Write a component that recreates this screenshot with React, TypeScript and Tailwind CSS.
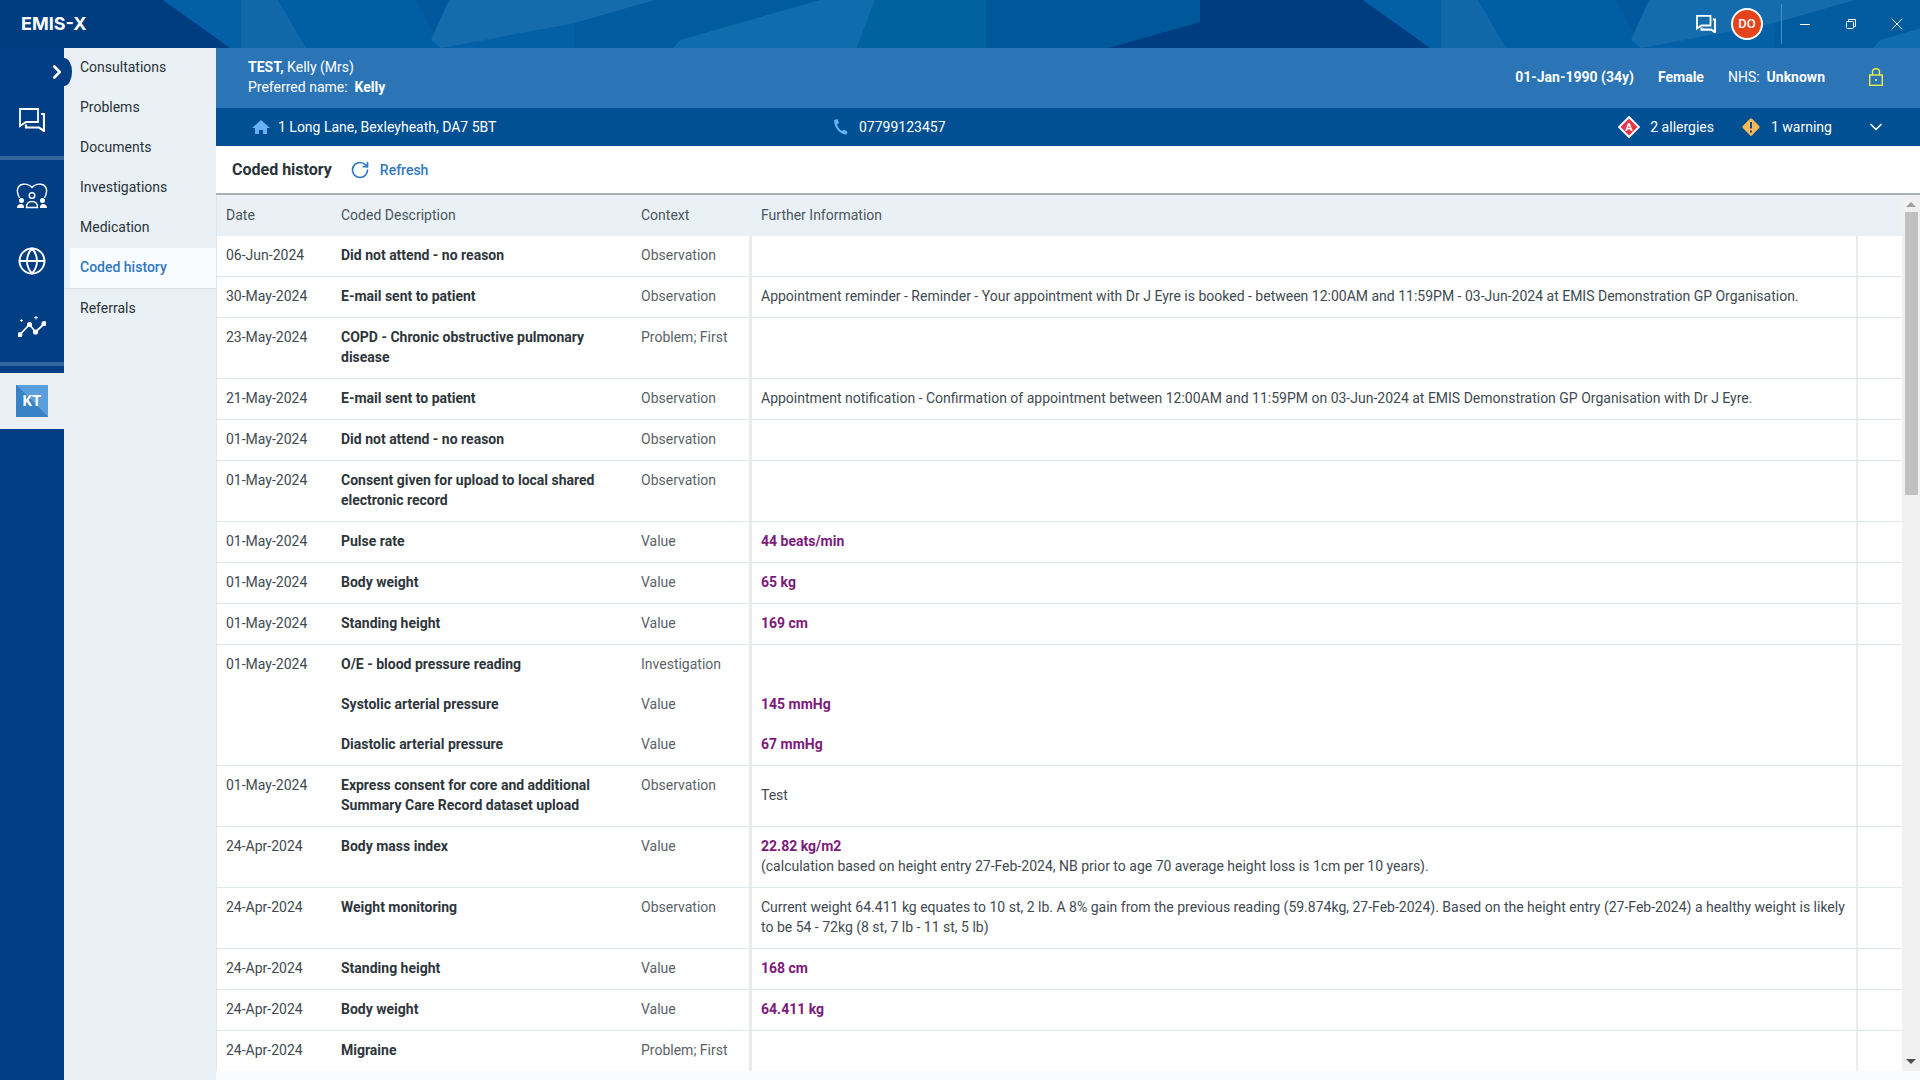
import React from "react";
import { ChevronRight, ChevronDown, X, RotateCw, Globe } from "lucide-react";

type Row = {
  date?: string;
  desc: string;
  context: string;
  info?: React.ReactNode;
  value?: string;
  tall?: boolean;
  centerInfo?: boolean;
};

const rows: Row[] = [
  { date: "06-Jun-2024", desc: "Did not attend - no reason", context: "Observation" },
  { date: "30-May-2024", desc: "E-mail sent to patient", context: "Observation", info: "Appointment reminder - Reminder - Your appointment with Dr J Eyre is booked - between 12:00AM and 11:59PM - 03-Jun-2024 at EMIS Demonstration GP Organisation." },
  { date: "23-May-2024", desc: "COPD - Chronic obstructive pulmonary disease", context: "Problem; First", tall: true },
  { date: "21-May-2024", desc: "E-mail sent to patient", context: "Observation", info: "Appointment notification - Confirmation of appointment between 12:00AM and 11:59PM on 03-Jun-2024 at EMIS Demonstration GP Organisation with Dr J Eyre." },
  { date: "01-May-2024", desc: "Did not attend - no reason", context: "Observation" },
  { date: "01-May-2024", desc: "Consent given for upload to local shared electronic record", context: "Observation", tall: true },
  { date: "01-May-2024", desc: "Pulse rate", context: "Value", value: "44 beats/min" },
  { date: "01-May-2024", desc: "Body weight", context: "Value", value: "65 kg" },
  { date: "01-May-2024", desc: "Standing height", context: "Value", value: "169 cm" },
];

const rowsAfter: Row[] = [
  { date: "01-May-2024", desc: "Express consent for core and additional Summary Care Record dataset upload", context: "Observation", info: "Test", tall: true, centerInfo: true },
  { date: "24-Apr-2024", desc: "Body mass index", context: "Value", value: "22.82 kg/m2", info: "(calculation based on height entry 27-Feb-2024, NB prior to age 70 average height loss is 1cm per 10 years).", tall: true },
  { date: "24-Apr-2024", desc: "Weight monitoring", context: "Observation", info: "Current weight 64.411 kg equates to 10 st, 2 lb. A 8% gain from the previous reading (59.874kg, 27-Feb-2024). Based on the height entry (27-Feb-2024) a healthy weight is likely to be 54 - 72kg (8 st, 7 lb - 11 st, 5 lb)", tall: true },
  { date: "24-Apr-2024", desc: "Standing height", context: "Value", value: "168 cm" },
  { date: "24-Apr-2024", desc: "Body weight", context: "Value", value: "64.411 kg" },
  { date: "24-Apr-2024", desc: "Migraine", context: "Problem; First" },
];

const navItems = ["Consultations", "Problems", "Documents", "Investigations", "Medication", "Coded history", "Referrals"];

// the banner picture repeats every 1200px
const BannerTile = ({ x }: { x: number }) => (
  <g transform={`translate(${x} 0)`}>
    <rect width="1200" height="48" fill="#0460a6" />
    <polygon points="241,0 278,0 306,48 241,48" fill="#1267a9" />
    <polygon points="278,0 416,0 441,48 306,48" fill="#005ea5" />
    <polygon points="416,0 449,0 431,40 441,48" fill="#02569c" />
    <polygon points="449,0 655,0 575,23 441,48 431,40" fill="#146cad" />
    <polygon points="655,0 820,0 680,40 673,48 575,48 575,23" fill="#005c9f" />
    <polygon points="820,0 875,0 857,48 673,48 680,40" fill="#0f6cad" />
    <polygon points="875,0 986,0 986,48 857,48" fill="#00629f" />
    <polygon points="986,0 1200,0 1200,22 1108,48 986,48" fill="#00589b" />
    <polygon points="1200,0 1200,22 1108,48 1200,48" fill="#003d80" />
    <polygon points="0,0 163,0 230,48 0,48" fill="#003d80" />
  </g>
);

const Banner = () => (
  <svg className="absolute inset-0 h-full w-full" viewBox="0 0 1920 48" preserveAspectRatio="none">
    <BannerTile x={0} />
    <BannerTile x={1200} />
  </svg>
);

const ChatIcon = ({ w, h, thick = 1.8 }: { w: number; h: number; thick?: number }) => (
  <svg width={w} height={h} viewBox="0 0 26 24" fill="none" stroke="white" strokeWidth={thick}>
    <path d="M1 1h18v13H7l-6 4z" />
    <path d="M22 6h3v17l-5-3.500H7v-3" strokeWidth={thick + 0.4} />
  </svg>
);

const TeamIcon = () => (
  <svg width="32" height="26" viewBox="0 0 32 26" fill="none" stroke="white" strokeWidth="1.400">
    <path d="M3.500 15C-.500 8 1.500 2 7 1.200c4-.500 7 1 9 3.300 2-2.300 5-3.800 9-3.300 5.500.8 7.500 6.800 3.500 13.800" />
    <circle cx="16" cy="12.500" r="2.800" />
    <path d="M10.500 24.500c0-4.500 2.500-6 5.500-6s5.500 1.500 5.500 6z" />
    <circle cx="5.500" cy="17.500" r="1.800" fill="white" />
    <circle cx="26.500" cy="17.500" r="1.800" fill="white" />
    <path d="M1 25c0-3 2-4 4-4s3 1 3 4zM24 25c0-3 1-4 3-4s4 1 4 4z" fill="white" stroke="none" />
  </svg>
);

const TrendIcon = () => (
  <svg width="28" height="21" viewBox="0 0 28 21" fill="none" stroke="white" strokeWidth="1.800">
    <path d="M1.500 19l10-10.500 6 7.500 9-8.500" />
    <circle cx="1.800" cy="18.800" r="1.700" fill="white" />
    <circle cx="11.500" cy="8.500" r="1.700" fill="white" />
    <circle cx="17.500" cy="16" r="1.700" fill="white" />
    <circle cx="26" cy="7.500" r="1.700" fill="white" />
    <path d="M3.500 3v3M2 4.500h3M18 0v3.500M16.200 1.700h3.600" strokeWidth="1" />
  </svg>
);

const LockIcon = () => (
  <svg width="14" height="18" viewBox="0 0 14 18" fill="none" stroke="#eef04a" strokeWidth="1.400">
    <rect x="0.700" y="7" width="12.600" height="10.300" />
    <path d="M3.500 7V3.800C3.500 1.800 5 .700 7 .700s3.500 1.100 3.500 3.100V7" />
    <circle cx="7" cy="12" r="1.100" fill="#eef04a" stroke="none" />
  </svg>
);

const HomeIcon = () => (
  <svg width="18" height="14" viewBox="0 0 18 14" fill="#69b0f5">
    <path d="M9 0l9 8h-3v6h-4v-4H7v4H3V8H0z" />
  </svg>
);

const PhoneIcon = () => (
  <svg width="16" height="16" viewBox="0 0 16 16" fill="#69b0f5">
    <path d="M1 1l3.500-1 1.500 4-2 1.500c.8 3 2.500 5 5 6.500l1.800-1.500 3.700 2.200-1 2.800C7 15.500 1 8.500 1 1z" />
  </svg>
);

const TableRow = ({ row, plain }: { row: Row; plain?: boolean }) => (
  <div
    className={
      row.tall
        ? "flex h-[61px] border-b border-[#dfe7ec]"
        : plain
          ? "flex h-10"
          : "flex h-[41px] border-b border-[#dfe7ec]"
    }
  >
    <div className="w-[124px] shrink-0 pl-[9px] pt-[9px] text-[#3f4a52]">{row.date}</div>
    <div className="w-[300px] shrink-0 pr-8 pt-[9px] font-bold text-[#2e363c]">{row.desc}</div>
    <div className="w-[108px] shrink-0 pt-[9px] text-[#5a6268]">{row.context}</div>
    {row.centerInfo ? (
      <div className="flex flex-1 items-center border-l-[3px] border-[#e9ecef] pb-0.5 pl-[9px] text-[#3f4a52]">{row.info}</div>
    ) : (
      <div className="flex-1 border-l-[3px] border-[#e9ecef] pl-[9px] pr-2 pt-[9px] text-[#3f4a52]">
        {row.value && <div className="font-bold text-[#7c1a7a]">{row.value}</div>}
        {row.info && <div>{row.info}</div>}
      </div>
    )}
    <div className="w-[46px] shrink-0 border-l-2 border-[#e9ecef]" />
  </div>
);

export default function App() {
  return (
    <div className="flex h-[1080px] w-[1920px] flex-col overflow-hidden bg-[#e9f1f7] font-['Roboto',sans-serif] text-[14px] leading-5">
      <header className="relative flex h-12 shrink-0 items-center overflow-hidden text-white">
        <Banner />
        <div className="relative pl-[21px] font-['Inter',sans-serif] text-[18px] font-bold">EMIS-X</div>
        <div className="relative ml-auto flex items-center pr-[13px]">
          <ChatIcon w={20} h={18} thick={2.4} />
          <div className="ml-[15px] flex h-8 w-8 items-center justify-center rounded-full border-2 border-white bg-[#e4431b] text-[13px] font-medium">DO</div>
          <div className="ml-[18px] h-10 w-px bg-[#4a8dc0]" />
          <div className="ml-[18px] h-px w-[10px] bg-white" />
          <svg className="ml-[36px]" width="10" height="10" viewBox="0 0 10 10" fill="none" stroke="white" strokeWidth="1">
            <rect x="0.500" y="2.500" width="7" height="7" rx="1" />
            <path d="M2.500 2.500V.500h7v7H7.500" />
          </svg>
          <X size={20} strokeWidth={1.200} className="ml-[31px]" />
        </div>
      </header>

      <div className="flex min-h-0 flex-1">
        <aside className="flex w-16 shrink-0 flex-col bg-[#023e84]">
          <div className="flex h-[108px] flex-col items-center justify-end pb-6">
            <ChatIcon w={26} h={24} />
          </div>
          <div className="h-1 bg-[#33659b]" />
          <div className="flex h-[202px] flex-col items-center pt-[23px]">
            <TeamIcon />
            <Globe size={30} strokeWidth={1.500} color="white" className="mt-[37px]" />
            <div className="mt-[40px]"><TrendIcon /></div>
          </div>
          <div className="h-1 bg-[#33659b]" />
          <div className="mt-[7px] flex h-14 items-center justify-center bg-[#e9f1f7]">
            <div className="flex h-8 w-8 items-center justify-center bg-[linear-gradient(45deg,#3a82c6_50%,#5a9fdc_50%)] text-[15px] font-bold text-white">KT</div>
          </div>
        </aside>

        <nav className="relative w-[152px] shrink-0 bg-[#e9f1f7]">
          <div className="absolute left-0 top-[10px] h-7 w-2 rounded-r-[8px_14px] bg-[#023e84]" />
          <ChevronRight size={22} strokeWidth={3} color="white" className="absolute -left-[18px] top-[13px]" />
          {navItems.map((item) =>
            item === "Coded history" ? (
              <div key={item} className="border-b border-[#d5dde5]">
                <div className="ml-[6px] flex h-10 items-center bg-[#f8fcff] pb-0.5 pl-[10px] font-medium text-[#2f78c0]">{item}</div>
              </div>
            ) : (
              <div key={item} className="flex h-10 items-center pb-0.5 pl-4 text-[#2a3238]">{item}</div>
            )
          )}
        </nav>

        <main className="flex min-w-0 flex-1 flex-col bg-white">
          <div className="flex h-[60px] shrink-0 items-center justify-between bg-[#2b74b6] pb-0.5 pl-8 pr-[37px] text-white">
            <div>
              <div><span className="font-bold">TEST,</span> Kelly (Mrs)</div>
              <div>Preferred name:&nbsp; <span className="font-bold">Kelly</span></div>
            </div>
            <div className="flex items-center">
              <span className="font-bold">01-Jan-1990 (34y)</span>
              <span className="ml-6 font-bold">Female</span>
              <span className="ml-6">NHS:&nbsp; <span className="font-bold">Unknown</span></span>
              <div className="ml-[44px]"><LockIcon /></div>
            </div>
          </div>

          <div className="flex h-[38px] shrink-0 items-center bg-[#005093] pl-9 pr-[34px] text-white">
            <HomeIcon />
            <span className="ml-2 w-[555px]">1 Long Lane, Bexleyheath, DA7 5BT</span>
            <PhoneIcon />
            <span className="ml-[10px]">07799123457</span>
            <div className="ml-auto flex items-center">
              <svg width="22" height="22" viewBox="0 0 22 22">
                <rect x="4" y="4" width="14" height="14" transform="rotate(45 11 11)" fill="#e8334a" stroke="white" strokeWidth="2" />
                <text x="11" y="15" textAnchor="middle" fontSize="11" fontWeight="700" fill="white" fontFamily="Roboto">A</text>
              </svg>
              <span className="ml-[10px]">2 allergies</span>
              <svg className="ml-[27px]" width="20" height="20" viewBox="0 0 20 20">
                <rect x="3.500" y="3.500" width="13" height="13" rx="1.500" transform="rotate(45 10 10)" fill="#fdb858" />
                <path d="M10 5v6.500M10 13.500v2" stroke="#0a4f96" strokeWidth="2" />
              </svg>
              <span className="ml-[10px] w-[95px]">1 warning</span>
              <ChevronDown size={20} strokeWidth={2} />
            </div>
          </div>

          <div className="flex h-[49px] shrink-0 items-center border-b-2 border-[#a7b0b5] pl-4">
            <span className="text-[16px] font-bold text-[#2a3238]">Coded history</span>
            <RotateCw size={20} strokeWidth={2} color="#2f78c0" className="ml-[18px]" />
            <span className="ml-[10px] font-medium text-[#2f78c0]">Refresh</span>
          </div>

          <div className="flex min-h-0 flex-1 flex-col bg-[#f8fcff]">
            <div className="flex h-[876px] min-h-0">
              <div className="min-w-0 flex-1 overflow-hidden border-l border-[#dfe7ec] bg-white">
                <div className="flex h-[41px] items-center bg-[#e9f1f7] pb-0.5 text-[#4a555c]">
                  <div className="w-[124px] pl-[9px]">Date</div>
                  <div className="w-[300px]">Coded Description</div>
                  <div className="w-[120px]">Context</div>
                  <div>Further Information</div>
                </div>
                {rows.map((row, i) => <TableRow key={i} row={row} />)}
                <TableRow row={{ date: "01-May-2024", desc: "O/E - blood pressure reading", context: "Investigation" }} plain />
                <TableRow row={{ desc: "Systolic arterial pressure", context: "Value", value: "145 mmHg" }} plain />
                <div className="border-b border-[#dfe7ec]">
                  <TableRow row={{ desc: "Diastolic arterial pressure", context: "Value", value: "67 mmHg" }} plain />
                </div>
                {rowsAfter.map((row, i) => <TableRow key={i} row={row} />)}
              </div>
              <div className="relative w-[18px] shrink-0 bg-[#f0f0f0]">
                <div className="absolute left-[3px] right-[2px] top-[17px] h-[283px] bg-[#c0c0c0]" />
                <div className="absolute left-1/2 top-[7px] -translate-x-1/2 border-x-[5px] border-b-[5px] border-x-transparent border-b-[#a0a0a0]" />
                <div className="absolute bottom-[7px] left-1/2 -translate-x-1/2 border-x-[5px] border-t-[5px] border-x-transparent border-t-[#505050]" />
              </div>
            </div>
          </div>
        </main>
      </div>
    </div>
  );
}
